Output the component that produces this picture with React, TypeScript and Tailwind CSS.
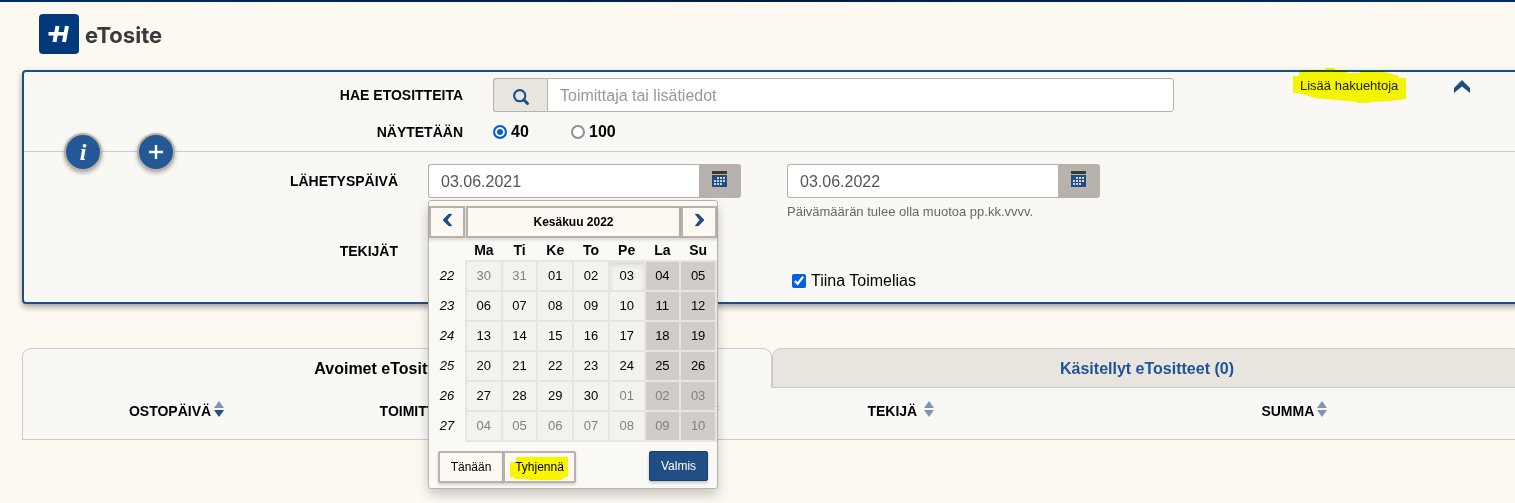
import React, { useState } from 'react';
import clsx from 'clsx';

const WEEKDAYS = ['Ma', 'Ti', 'Ke', 'To', 'Pe', 'La', 'Su'];

const WEEKS = [
  { number: 22, days: ['30', '31', '01', '02', '03', '04', '05'] },
  { number: 23, days: ['06', '07', '08', '09', '10', '11', '12'] },
  { number: 24, days: ['13', '14', '15', '16', '17', '18', '19'] },
  { number: 25, days: ['20', '21', '22', '23', '24', '25', '26'] },
  { number: 26, days: ['27', '28', '29', '30', '01', '02', '03'] },
  { number: 27, days: ['04', '05', '06', '07', '08', '09', '10'] },
];

const isOtherMonth = (week: number, day: number) =>
  (week === 0 && day < 2) || (week === 4 && day > 3) || week === 5;

function Chevron({ className }: { className?: string }) {
  return (
    <svg className={className} viewBox="0 0 16 13" fill="#1f4e84" aria-hidden="true">
      <path d="M8 0L16 8V13L8 6.5L0 13V8Z" />
    </svg>
  );
}

function CalendarIcon() {
  return (
    <svg className="w-[15px] h-4" viewBox="0 0 15 16" aria-hidden="true">
      <path d="M0 0h15v3H0z" fill="#3d3733" />
      <path d="M0 4h15v12H0z" fill="#1f4e84" />
      <path
        d="M5 6h2v2H5zM8 6h2v2H8zM11 6h2v2h-2zM2 9h2v2H2zM5 9h2v2H5zM8 9h2v2H8zM11 9h2v2h-2zM2 12h2v2H2zM5 12h2v2H5zM8 12h2v2H8z"
        fill="#d5d3d3"
      />
    </svg>
  );
}

function SortIcon({ descending = false }: { descending?: boolean }) {
  return (
    <svg className="-mt-[6px] w-[10px] h-4" viewBox="0 0 10 16" aria-hidden="true">
      <path d="M5 0L10 7H0Z" fill="#7b94b8" />
      <path d="M0 9H10L5 16Z" fill={descending ? '#1f4e84' : '#7b94b8'} />
    </svg>
  );
}

function DatePicker() {
  const outlined = 'border-2 border-[#b8b2ad] bg-[#fdf9f2] shadow-[0_2px_3px_rgba(0,0,0,0.15)]';

  return (
    <div className="absolute left-0 top-full z-10 mt-[2px] w-[290px] rounded-[3px] border border-[#b8b2ad] bg-[#faf9f6] pt-[5px] pb-[5px] text-[13px] shadow-[0_6px_12px_rgba(0,0,0,0.2)]">
      <div className="flex h-8">
        <button type="button" aria-label="Edellinen kuukausi" className={clsx('flex w-9 items-start justify-center pt-[7px]', outlined)}>
          <Chevron className="h-[10px] w-[13px] -rotate-90" />
        </button>
        <button type="button" className={clsx('ml-px flex-1 text-[12px] font-bold', outlined)}>Kesäkuu 2022</button>
        <button type="button" aria-label="Seuraava kuukausi" className={clsx('flex w-9 items-start justify-center pt-[7px]', outlined)}>
          <Chevron className="h-[10px] w-[13px] rotate-90" />
        </button>
      </div>

      <table className="w-full table-fixed border-collapse text-center">
        <thead>
          <tr className="h-[22px] text-[14px]">
            <td className="w-[37px]"></td>
            {WEEKDAYS.map((name) => (
              <th key={name} scope="col" className="p-0 pt-[2px] leading-5">{name}</th>
            ))}
          </tr>
        </thead>
        <tbody>
          {WEEKS.map((week, w) => (
            <tr key={week.number} className="h-[30px]">
              <th scope="row" className="p-0 font-normal italic">{week.number}</th>
              {week.days.map((day, d) => (
                <td
                  key={d}
                  className={clsx(
                    'border-2 border-[#e8e5de] p-0',
                    d > 4 ? 'bg-[#d0ccc7]' : 'bg-[#f4f2ec]',
                    w === 0 && d === 4 && 'shadow-[inset_0_3px_5px_rgba(0,0,0,0.1)]',
                    isOtherMonth(w, d) && 'text-[#82807d]'
                  )}
                >
                  <button type="button" className="w-full">{day}</button>
                </td>
              ))}
            </tr>
          ))}
        </tbody>
      </table>

      <div className="mt-[9px] flex items-start px-[9px] text-[12px]">
        <button type="button" className={clsx('h-8 w-[66px] rounded-l-[2px]', outlined)}>Tänään</button>
        <button type="button" className={clsx('relative -ml-px h-8 w-[73px] rounded-r-[2px]', outlined)}>
          Tyhjennä
          <svg className="absolute left-[5px] top-1 h-[23px] w-[58px] mix-blend-multiply" viewBox="0 0 58 23" fill="#fbfb00" aria-hidden="true">
            <path d="M6 0H58V20H55V21H52V23H19V22H4V20H0V5H6Z" />
          </svg>
        </button>
        <button type="button" className="ml-auto h-[30px] w-[59px] rounded-[2px] border border-[#183f6d] bg-[#1f4e84] text-white shadow-[0_2px_3px_rgba(0,0,0,0.2)]">
          Valmis
        </button>
      </div>
    </div>
  );
}

interface DateFieldProps {
  id: string;
  label: string;
  defaultValue: string;
  children?: React.ReactNode;
}

function DateField({ id, label, defaultValue, children }: DateFieldProps) {
  return (
    <div className="relative w-[313px]">
      <div className="flex h-[34px]">
        <input
          id={id}
          type="text"
          aria-label={label}
          defaultValue={defaultValue}
          className="min-w-0 flex-1 rounded-l-[3px] border border-r-0 border-[#b8b2ad] bg-white px-3 pt-[2px] text-[16px] text-[#555555]"
        />
        <button type="button" aria-label="Avaa kalenteri" className="flex w-[42px] items-start justify-center rounded-r-[3px] bg-[#b8b2ad] pt-[7px] pr-[2px]">
          <CalendarIcon />
        </button>
      </div>
      {children}
    </div>
  );
}

function RoundButton({ label, children }: { label: string; children: React.ReactNode }) {
  return (
    <button
      type="button"
      aria-label={label}
      className="flex h-[38px] w-[38px] items-center justify-center rounded-full border-2 border-[#b8b2ad] bg-[#255896] shadow-[0_2px_4px_rgba(0,0,0,0.3)]"
    >
      {children}
    </button>
  );
}

const radioClass =
  'h-[14px] w-[14px] appearance-none rounded-full border-2 border-[#8f8f9d] bg-white checked:border-[#0060df] checked:bg-[#0060df] checked:shadow-[inset_0_0_0_2px_white]';

function SearchPanel() {
  const [limit, setLimit] = useState('40');

  return (
    <form className="relative rounded-[4px] border-2 border-[#1f4e84] bg-[#f9f8f5] shadow-[0_3px_6px_rgba(0,0,0,0.35)]">
      <div className="border-b border-[#cbcac6] pt-[6px] pb-[7px]">
        <div className="flex items-start">
          <label htmlFor="search" className="w-[469px] pr-[30px] text-right text-[14px] font-bold leading-[34px]">
            HAE ETOSITTEITA
          </label>
          <div className="flex h-[34px] min-w-0 flex-1">
            <button type="button" aria-label="Hae" className="flex w-[54px] items-center justify-center rounded-l-[3px] border border-r-0 border-[#b8b2ad] bg-[#e8e5de] pt-1">
              <svg className="h-4 w-4" viewBox="0 0 16 16" fill="none" stroke="#1f4e84" aria-hidden="true">
                <circle cx="6.7" cy="6.7" r="5.6" strokeWidth="2.1" />
                <path d="M11 11L14.5 14.5" strokeWidth="3" strokeLinecap="round" />
              </svg>
            </button>
            <input
              id="search"
              type="text"
              placeholder="Toimittaja tai lisätiedot"
              className="min-w-0 flex-1 rounded-r-[3px] border border-[#b8b2ad] bg-white px-3 pt-[2px] text-[16px] placeholder:text-[#999999]"
            />
          </div>
          <div className="flex w-[346px] justify-between pl-[126px] pr-[50px]">
            <a href="#" className="relative text-[13px] leading-4 text-[#222222]">
              Lisää hakuehtoja
              <svg className="absolute -left-[7px] -top-[10px] h-[35px] w-[113px] max-w-none mix-blend-multiply" viewBox="0 0 113 35" fill="#fbfb00" aria-hidden="true">
                <path d="M6 4L14 2L32 2V0H42V2L54 3V5H67V3H88L106 8V10H113V31L98 33L77 34V35H64V34L44 32L22 30L6 25H0V8H6Z" />
              </svg>
            </a>
            <button type="button" aria-label="Piilota hakuehdot">
              <Chevron className="h-[13px] w-4" />
            </button>
          </div>
        </div>

        <div role="radiogroup" aria-labelledby="limit-label" className="mt-2 flex h-6 items-center text-[16px] font-bold">
          <span id="limit-label" className="w-[469px] pr-[30px] text-right text-[14px]">NÄYTETÄÄN</span>
          {['40', '100'].map((value) => (
            <label key={value} className="flex w-[78px] items-center gap-1">
              <input
                type="radio"
                name="limit"
                value={value}
                checked={limit === value}
                onChange={() => setLimit(value)}
                className={radioClass}
              />
              {value}
            </label>
          ))}
        </div>
      </div>

      {/* Pyöreät painikkeet jakoviivan päällä */}
      <div className="absolute left-10 top-[61px] flex gap-[35px]">
        <RoundButton label="Ohje">
          <span className="font-['Liberation_Serif',serif] text-[24px] font-bold italic leading-none text-white">i</span>
        </RoundButton>
        <RoundButton label="Lisää">
          <svg className="h-[14px] w-[14px]" viewBox="0 0 14 14" stroke="#ffffff" strokeWidth="2.4" aria-hidden="true">
            <path d="M7 0V14M0 7H14" />
          </svg>
        </RoundButton>
      </div>

      <div className="pt-3 pb-[9px]">
        <div className="flex h-[77px] items-start">
          <span className="w-[404px] pr-[30px] text-right text-[14px] font-bold leading-[34px]">LÄHETYSPÄIVÄ</span>
          <div className="flex items-start gap-[46px]">
            <DateField id="from" label="Lähetyspäivä alkaen" defaultValue="03.06.2021">
              <DatePicker />
            </DateField>
            <div>
              <DateField id="to" label="Lähetyspäivä päättyen" defaultValue="03.06.2022" />
              <p className="mt-1 text-[13px] leading-5 text-[#6b6663]">Päivämäärän tulee olla muotoa pp.kk.vvvv.</p>
            </div>
          </div>
        </div>
        <div className="flex items-start">
          <span className="w-[404px] pr-[30px] text-right text-[14px] font-bold leading-5">TEKIJÄT</span>
          <label className="ml-[364px] mt-7 flex h-6 items-center gap-[5px] text-[16px]">
            <input type="checkbox" defaultChecked className="h-[14px] w-[14px] accent-[#0061e0]" />
            Tiina Toimelias
          </label>
        </div>
      </div>
    </form>
  );
}

function ReceiptTabs() {
  return (
    <section className="mt-11">
      <div className="flex h-10 text-[16px] font-bold">
        <button type="button" className="flex-1 rounded-t-[9px] border border-b-0 border-[#cbcac6] bg-[#f9f8f5]">
          Avoimet eTositteet (0)
        </button>
        <button type="button" className="flex-1 rounded-t-[9px] border border-[#cbcac6] bg-[#e8e5de] pt-px text-[#1f5297]">
          Käsitellyt eTositteet (0)
        </button>
      </div>
      <div className="border border-t-0 border-[#cbcac6] bg-[#f9f8f5]">
        <table className="w-full table-fixed text-[14px]">
          <thead>
            <tr className="h-[51px]">
              <th className="w-[20.5%] p-0 pb-1">
                <span className="inline-flex items-center gap-[3px]">OSTOPÄIVÄ <SortIcon descending /></span>
              </th>
              <th className="w-[13%] p-0 pb-1">
                <span className="inline-flex items-center gap-[3px]">TOIMITTAJA <SortIcon /></span>
              </th>
              <th aria-label="Lisätiedot" className="w-[19.3%] p-0 pb-1 pl-[90px]">
                <span className="inline-flex"><SortIcon /></span>
              </th>
              <th className="w-[11.6%] p-0 pb-1">
                <span className="inline-flex items-center gap-[7px]">TEKIJÄ <SortIcon /></span>
              </th>
              <th className="p-0 pb-1 pl-20">
                <span className="inline-flex items-center gap-[3px]">SUMMA <SortIcon /></span>
              </th>
            </tr>
          </thead>
        </table>
      </div>
    </section>
  );
}

function App() {
  return (
    <div className="min-h-screen overflow-x-hidden bg-[#fcf9f1] font-['Liberation_Sans',Arial,sans-serif] text-black">
      <div className="h-[2px] bg-linear-to-r from-[#002e6b] via-[#001a3d] to-[#002e6b]" />
      <header className="flex h-[68px] items-start gap-[6px] pl-[39px] pt-3">
        <svg className="h-10 w-10" viewBox="0 0 40 40" aria-hidden="true">
          <rect width="40" height="40" rx="4" fill="#003a7a" />
          <path d="M18.5 12L15.5 28M28 12L25 28" stroke="#ffffff" strokeWidth="4" />
          <path d="M9.5 19.8H27" stroke="#ffffff" strokeWidth="3.6" />
        </svg>
        <span className="font-['Inter',sans-serif] text-[22px] font-bold leading-[42px] text-[#3a3a3a]">eTosite</span>
      </header>
      <main className="-mr-[7px] ml-[22px]">
        <SearchPanel />
        <ReceiptTabs />
      </main>
    </div>
  );
}

export default App;
